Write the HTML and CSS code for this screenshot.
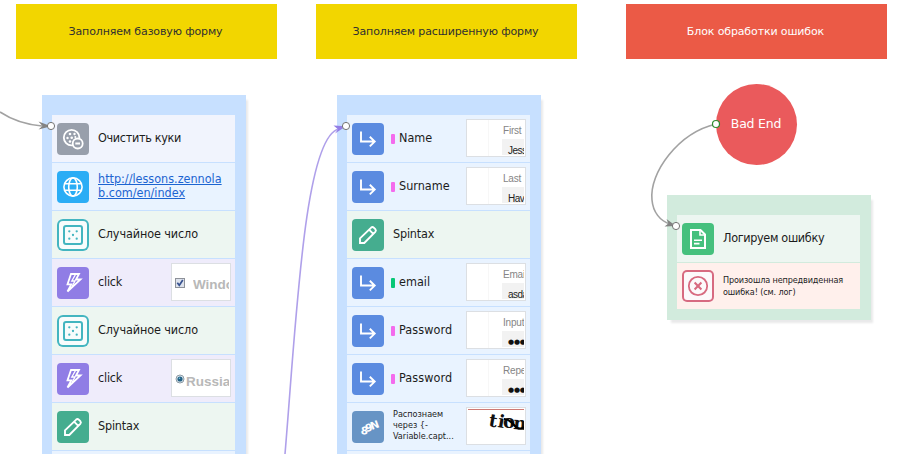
FILE: index.html
```html
<!DOCTYPE html>
<html lang="ru">
<head>
<meta charset="utf-8">
<title>Схема проекта</title>
<link rel="stylesheet" href="styles.css">
</head>
<body>
<svg class="defs" width="0" height="0">
  <symbol id="input" viewBox="0 0 32 32"><path d="M9 8.500V18.500H22.500M17.800 13.800L22.700 18.600L17.800 23.400" fill="none" stroke="#fff" stroke-width="1.900"/></symbol>
  <symbol id="bolt" viewBox="0 0 32 32"><path d="M14 7H22L19 12.500H23.500L10.500 24.500L14.300 17.300H10.500Z" fill="none" stroke="#fff" stroke-width="1.800"/><path d="M18.500 7.500L14.800 14H18L15 19.500" fill="none" stroke="#fff" stroke-width="1.300"/></symbol>
  <symbol id="pencil" viewBox="0 0 32 32"><path d="M8 24V19.300L19.200 8.600Q20.500 7.500 21.800 8.700L23.300 10.200Q24.500 11.500 23.300 12.800L12.300 24Z M17.300 10.800L21.300 14.800" fill="none" stroke="#fff" stroke-width="1.900"/></symbol>
  <symbol id="dice" viewBox="0 0 32 32"><rect x="7" y="7" width="18" height="18" rx="2" fill="none" stroke="#43b5c0" stroke-width="2"/><g fill="#43b5c0"><circle cx="12.300" cy="12.300" r="1.150"/><circle cx="19.700" cy="12.300" r="1.150"/><circle cx="16" cy="16" r="1.150"/><circle cx="12.300" cy="19.700" r="1.150"/><circle cx="19.700" cy="19.700" r="1.150"/></g></symbol>
  <symbol id="cookie" viewBox="0 0 32 32"><circle cx="14.600" cy="14.600" r="7.800" fill="none" stroke="#fff" stroke-width="1.800"/><g fill="#fff"><circle cx="13" cy="11" r="1.300"/><circle cx="17.500" cy="11" r="1.200"/><circle cx="10.500" cy="15" r="1.200"/><circle cx="14.700" cy="14.800" r="1.300"/><circle cx="18.300" cy="14" r="1"/><circle cx="13" cy="18.500" r="1.300"/></g><circle cx="20.700" cy="20.500" r="5" fill="#989fab" stroke="#fff" stroke-width="1.800"/><path d="M18.300 20.500H23" stroke="#fff" stroke-width="1.800"/></symbol>
  <symbol id="globe" viewBox="0 0 32 32"><g fill="none" stroke="#fff" stroke-width="1.600"><circle cx="16" cy="16" r="9.100"/><ellipse cx="16" cy="16" rx="4.300" ry="9.100"/><path d="M7.500 12.800H24.500M7.500 19.200H24.500"/></g></symbol>
  <symbol id="file" viewBox="0 0 32 32"><path d="M9 7H18.500L23 11.500V25H9Z" fill="none" stroke="#fff" stroke-width="2"/><path d="M18 7V12H23M12 17.200H20M12 20.600H17.500" fill="none" stroke="#fff" stroke-width="1.600"/></symbol>
  <symbol id="fail" viewBox="0 0 32 32"><g fill="none" stroke="#d76a80" stroke-width="1.800"><circle cx="16" cy="16" r="9.200"/><path d="M12.600 12.600L19.400 19.400M19.400 12.600L12.600 19.400" stroke-width="2.100"/></g></symbol>
</svg>

<main class="canvas">
  <div class="banner banner-base"><span>Заполняем базовую форму</span></div>
  <div class="banner banner-ext"><span>Заполняем расширенную форму</span></div>
  <div class="banner banner-err"><span>Блок обработки ошибок</span></div>

  <section class="node node-base">
    <div class="row grey"><svg class="icon i-cookie"><use href="#cookie"/></svg><span class="label l-cookies">Очистить куки</span></div>
    <div class="row blue"><svg class="icon i-globe"><use href="#globe"/></svg><span class="label link">http://lessons.zennola<br>b.com/en/index</span></div>
    <div class="row green"><svg class="icon i-dice"><use href="#dice"/></svg><span class="label l-random">Случайное число</span></div>
    <div class="row violet"><svg class="icon i-bolt"><use href="#bolt"/></svg><span class="label l-latin">click</span>
      <div class="thumb option"><svg class="check" viewBox="0 0 10 10"><rect x=".5" y=".5" width="9" height="9" fill="#dde2ec" stroke="#8d9199"/><path d="M2.300 4.800L4.300 7.300L7.800 2" fill="none" stroke="#37518f" stroke-width="1.700"/></svg><b>Windo</b></div></div>
    <div class="row green"><svg class="icon i-dice"><use href="#dice"/></svg><span class="label l-random">Случайное число</span></div>
    <div class="row violet"><svg class="icon i-bolt"><use href="#bolt"/></svg><span class="label l-latin">click</span>
      <div class="thumb option radio"><svg class="check" viewBox="0 0 10 10"><circle cx="5" cy="5" r="4" fill="#e4edf3" stroke="#8d9ba5"/><circle cx="5" cy="5" r="2.600" fill="#226084"/><circle cx="4.500" cy="4.300" r=".8" fill="#7cc5df"/></svg><b>Russia</b></div></div>
    <div class="row green"><svg class="icon i-pencil"><use href="#pencil"/></svg><span class="label l-latin">Spintax</span></div>
    <div class="row blue"></div>
  </section>

  <section class="node node-ext">
    <div class="row blue"><svg class="icon i-input"><use href="#input"/></svg><i class="mark"></i><span class="label">Name</span><div class="thumb field"><span>First</span><em>Jess</em></div></div>
    <div class="row blue"><svg class="icon i-input"><use href="#input"/></svg><i class="mark"></i><span class="label">Surname</span><div class="thumb field"><span>Last n</span><em>Hav</em></div></div>
    <div class="row green"><svg class="icon i-pencil"><use href="#pencil"/></svg><span class="label l-latin">Spintax</span></div>
    <div class="row blue"><svg class="icon i-input"><use href="#input"/></svg><i class="mark mark-green"></i><span class="label">email</span><div class="thumb field"><span>Emai</span><em>asda</em></div></div>
    <div class="row blue"><svg class="icon i-input"><use href="#input"/></svg><i class="mark"></i><span class="label l-pass">Password</span><div class="thumb field secret"><span>Input</span><em>●●●</em></div></div>
    <div class="row blue"><svg class="icon i-input"><use href="#input"/></svg><i class="mark"></i><span class="label l-pass">Password</span><div class="thumb field secret"><span>Repe</span><em>●●●</em></div></div>
    <div class="row blue"><svg class="icon i-captcha" viewBox="0 0 32 32"><text class="scribble" x="6.500 12.500 18.500" y="20" transform="rotate(-20 16 16)" rotate="25 8 0">89N</text></svg><span class="label small">Распознаем<br>через {-<br>Variable.capt...</span>
      <div class="thumb captcha"><svg width="56" height="34" viewBox="0 0 56 34"><path d="M0 .5H56" stroke="#cf7a74"/><text class="warp" x="20 29 35 45" y="17 18 19 20" rotate="10 10 0 4">tion</text><path d="M36 10Q41 10 46 16T56 18" fill="none" stroke="#000" stroke-width="2.200"/></svg></div></div>
    <div class="row blue"></div>
  </section>

  <section class="node node-log">
    <div class="row green"><svg class="icon i-file"><use href="#file"/></svg><span class="label l-log">Логируем ошибку</span></div>
    <div class="row rose"><svg class="icon i-fail"><use href="#fail"/></svg><span class="label small l-fail">Произошла непредвиденная<br>ошибка! (см. лог)</span></div>
  </section>

  <div class="bad-end"><span>Bad End</span></div>

  <svg class="wires" width="902" height="454" viewBox="0 0 902 454" fill="none">
    <path d="M0 112Q18 124 42 126" stroke="#a2a2a2" stroke-width="1.600"/>
    <path d="M38.500 121.500L51 126.300L38.500 129.500L42.500 126Z" fill="#828282"/>
    <path d="M285 454C296 325 304 136 339 129" stroke="#afa0ea" stroke-width="1.600"/>
    <path d="M333.500 125.500L346 126.300L335 133.500L338 129.200Z" fill="#927ee6"/>
    <path d="M716 124C678 133 649 173 652 200C653 212 660 221 670 224" stroke="#a2a2a2" stroke-width="1.600"/>
    <path d="M666.500 219L676 226L664.500 226.500L668.500 223.500Z" fill="#828282"/>
    <g fill="#fff" stroke="#747474" stroke-width="1"><circle cx="51" cy="126" r="3.600"/><circle cx="346" cy="126" r="3.600"/><circle cx="676" cy="226" r="3.600"/></g>
    <circle cx="716" cy="124" r="3.500" fill="#fff" stroke="#2c8c2c" stroke-width="1.200"/>
  </svg>
</main>
</body>
</html>
```

FILE: styles.css
```css
* { box-sizing: border-box; }
body { margin: 0; background: #fff; overflow: hidden; }
.defs { position: absolute; }
.canvas { position: relative; width: 902px; height: 454px; overflow: hidden; font: 12.5px/14px "DejaVu Sans Condensed", "DejaVu Sans", sans-serif; font-stretch: condensed; color: #1c1c1c; }
.banner { position: absolute; top: 4px; width: 261px; height: 55px; padding: 0 2px 0 0; display: flex; align-items: center; justify-content: center; font: 11px/14px "DejaVu Sans", sans-serif; letter-spacing: -.13px; color: #303030; background: #f2d600; }
.banner-base { left: 16px; }
.banner-ext { left: 316px; }
.banner-err { left: 626px; background: #eb5a46; color: #fff; }

.node { position: absolute; top: 95px; width: 204px; height: 380px; padding: 20px 11px 11px 10px; background: #c7e0ff; box-shadow: 3px 4px 2px -1px #e9e9ea; }
.node-base { left: 42px; }
.node-ext { left: 337px; }
.node-log { left: 667px; top: 195px; height: 125px; background: #d2ebdd; }
.row { height: 47px; margin-bottom: 1px; display: flex; align-items: center; position: relative; padding-left: 5px; }
.grey { background: #f1f4fd; }
.blue { background: #e9f3ff; }
.green { background: #edf6f1; }
.violet { background: #efecfb; }
.rose { background: #fff0ec; height: 46px; }
.icon { flex: none; width: 32px; height: 32px; border-radius: 4px; }
.label { margin-left: 9px; padding-bottom: 2px; white-space: nowrap; }
.mark { flex: none; width: 4px; height: 10px; margin-left: 7px; border-radius: 1px; background: #f46bed; }
.mark-green { background: #08c777; }
.mark + .label { margin-left: 4px; }
.l-cookies { letter-spacing: -.32px; }
.l-random { letter-spacing: -.1px; }
.l-log { letter-spacing: -.33px; }
.l-latin { letter-spacing: -.2px; }
.l-pass { letter-spacing: .1px; }
.link { color: #1c64d1; text-decoration: underline; line-height: 14px; }
.small { font-size: 9px; line-height: 11px; }
.l-fail { letter-spacing: -.13px; line-height: 12px; padding-bottom: 1px; }
.i-cookie { background: #989fab; }
.i-globe { background: #2badf5; }
.i-bolt { background: #907de5; }
.i-pencil { background: #45ad8f; }
.i-input { background: #5b8be0; }
.i-captcha { background: #6794c5; }
.i-file { background: #45c07d; }
.i-dice { background: #f8fcfc; box-shadow: inset 0 0 0 2px #43b5c0; border-radius: 6px; }
.i-fail { background: #fcf9fb; box-shadow: inset 0 0 0 2px #d76a80; border-radius: 5px; }
.scribble { font: bold 10.5px "DejaVu Sans", sans-serif; fill: #fff; }

.thumb { position: absolute; left: 119px; top: 4px; width: 60px; height: 38px; padding: 1px; border: 1px solid #dcdfe3; background: #fff; overflow: hidden; font-family: "Liberation Sans", sans-serif; }
.option { display: flex; align-items: center; padding: 3px 0 0 3px; gap: 8px; }
.option b { font-size: 13.5px; color: #b8b8b8; width: 36px; overflow: hidden; line-height: 18px; margin-top: 3px; }
.check { flex: none; width: 10px; height: 10px; margin-top: -2px; }
.radio { gap: 1px; padding-top: 4px; }
.radio b { width: 43px; }
.field { display: flex; flex-direction: column; padding: 4px 1px 1px 35px; font-size: 10px; line-height: 13px; letter-spacing: -.2px; background: linear-gradient(90deg, #fff 21px, #f7f7f7 21px 22px, #fff 22px); }
.field span { padding-left: 1px; color: #858585; white-space: nowrap; overflow: hidden; }
.field em { flex: 1; margin-top: 2px; padding: 5px 0 0 6px; font-style: normal; color: #222; letter-spacing: -.5px; background: #f2f2f2; overflow: hidden; white-space: nowrap; line-height: 13px; }
.secret em { font: 7px/13px "DejaVu Sans", sans-serif; letter-spacing: -.2px; color: #111; }
.warp { font: bold 18px "DejaVu Serif", serif; fill: #111; }
.bad-end { position: absolute; left: 716px; top: 84px; width: 81px; height: 81px; padding: 0 1px 2px 0; border-radius: 50%; display: flex; align-items: center; justify-content: center; background: #ea5a5c; color: #fff; font: 12.5px/16px "DejaVu Sans", sans-serif; letter-spacing: -.2px; }
.wires { position: absolute; left: 0; top: 0; }
```
